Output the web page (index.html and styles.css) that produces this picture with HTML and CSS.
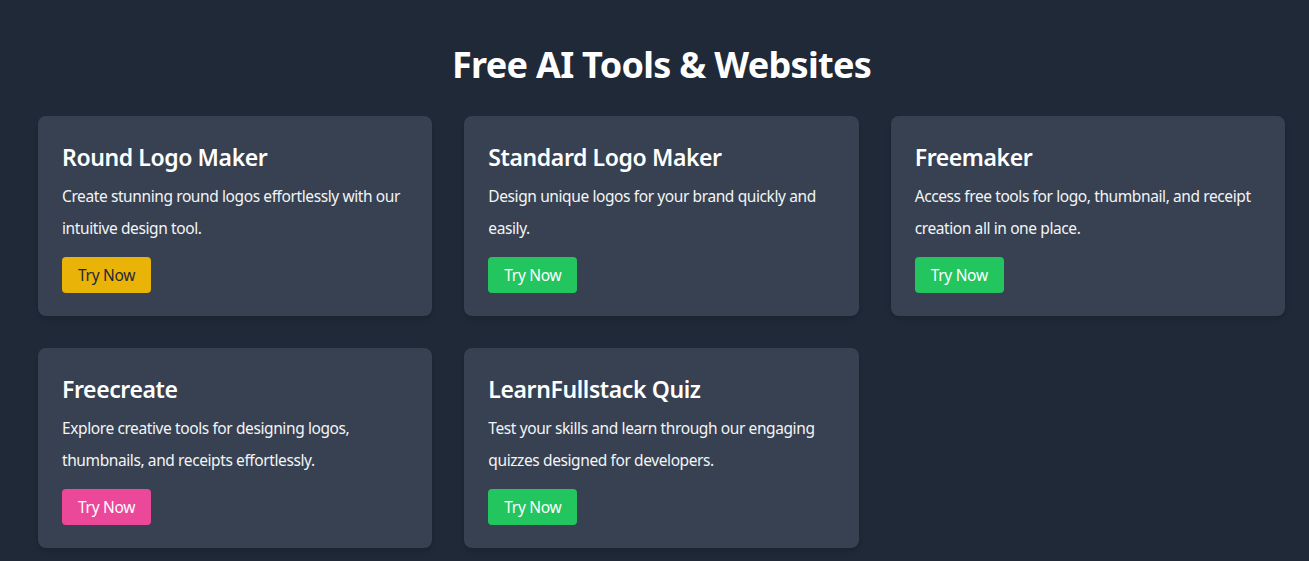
FILE: index.html
```html
<!DOCTYPE html>
<html lang="en">
<head>
<meta charset="utf-8">
<title>Free AI Tools &amp; Websites</title>
<link rel="stylesheet" href="styles.css">
</head>
<body>
<main class="page">
  <h1 class="page-title">Free AI Tools &amp; Websites</h1>
  <div class="grid">
    <div class="card">
      <h2 class="card-title">Round Logo Maker</h2>
      <p class="card-text">Create stunning round logos effortlessly with our intuitive design tool.</p>
      <a class="btn btn-yellow" href="#">Try Now</a>
    </div>
    <div class="card">
      <h2 class="card-title">Standard Logo Maker</h2>
      <p class="card-text">Design unique logos for your brand quickly and easily.</p>
      <a class="btn btn-green" href="#">Try Now</a>
    </div>
    <div class="card">
      <h2 class="card-title">Freemaker</h2>
      <p class="card-text">Access free tools for logo, thumbnail, and receipt creation all in one place.</p>
      <a class="btn btn-green" href="#">Try Now</a>
    </div>
    <div class="card">
      <h2 class="card-title">Freecreate</h2>
      <p class="card-text">Explore creative tools for designing logos, thumbnails, and receipts effortlessly.</p>
      <a class="btn btn-pink" href="#">Try Now</a>
    </div>
    <div class="card">
      <h2 class="card-title">LearnFullstack Quiz</h2>
      <p class="card-text">Test your skills and learn through our engaging quizzes designed for developers.</p>
      <a class="btn btn-green" href="#">Try Now</a>
    </div>
  </div>
</main>
</body>
</html>
```

FILE: styles.css
```css
* { box-sizing: border-box; }
html, body {
  margin: 0;
  padding: 0;
  background: #1f2937;
  height: 100%;
}
body {
  font-family: "Noto Sans", "Open Sans", sans-serif;
  color: #fff;
  overflow: hidden;
}
.page {
  padding: 45px 24px 0 38px;
}
.page-title {
  margin: 0 0 31px;
  font-size: 36px;
  line-height: 40px;
  font-weight: 700;
  text-align: center;
  letter-spacing: -0.7px;
}
.grid {
  display: grid;
  grid-template-columns: repeat(3, 1fr);
  gap: 32px;
}
.card {
  background: #374151;
  border-radius: 8px;
  padding: 25px 24px 23px;
  box-shadow: 0 4px 6px -1px rgba(0,0,0,0.1), 0 2px 4px -2px rgba(0,0,0,0.1);
}
.card-title {
  margin: 0 0 7px;
  font-size: 23px;
  line-height: 32px;
  font-weight: 600;
  letter-spacing: -0.4px;
}
.card-text {
  margin: 0 0 13px;
  font-size: 15.5px;
  line-height: 32px;
  color: #f3f4f6;
  letter-spacing: -0.4px;
}
.btn {
  display: inline-block;
  padding: 8px 16px;
  font-size: 15.5px;
  line-height: 20px;
  border-radius: 4px;
  text-decoration: none;
  color: #fff;
  letter-spacing: -0.3px;
}
.btn-yellow { background: #eab308; color: #1f2937; }
.btn-green { background: #22c55e; }
.btn-pink { background: #ec4899; }
```
